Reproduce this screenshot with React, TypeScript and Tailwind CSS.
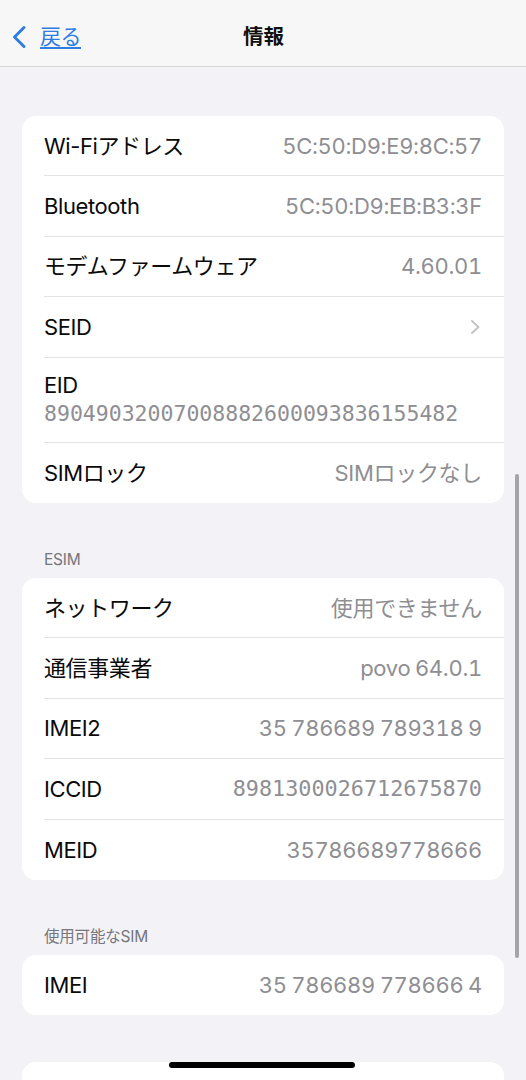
import React from "react";

type RowProps = {
  label: string;
  value?: string;
  mono?: boolean;
  chevron?: boolean;
  last?: boolean;
};

function Row({ label, value, mono, chevron, last }: RowProps) {
  return (
    <div className="pl-[22px]">
      <div
        className={
          last
            ? "h-[60.4px] flex items-center justify-between pr-[22px] pt-[1px]"
            : "h-[60.4px] flex items-center justify-between pr-[22px] pt-[1px] border-b border-[#e3e3e6]"
        }
      >
        <span className="text-[22px] tracking-[-0.4px] text-[#0a0a0a]">{label}</span>
        {chevron ? (
          <svg width="11" height="16" viewBox="0 0 11 16" className="mr-[1px]">
            <polyline
              points="2,2 8.5,8 2,14"
              fill="none"
              stroke="#c4c4c8"
              strokeWidth="2"
              strokeLinecap="round"
              strokeLinejoin="round"
            />
          </svg>
        ) : mono ? (
          <span className="font-['DejaVu_Sans_Mono',monospace] text-[21.8px] tracking-[0px] text-[#8e8e93]">
            {value}
          </span>
        ) : (
          <span className="text-[22px] tracking-[-0.3px] [word-spacing:-1px] tabular-nums text-[#8e8e93]">
            {value}
          </span>
        )}
      </div>
    </div>
  );
}

function Card({ children }: { children: React.ReactNode }) {
  return <div className="bg-white rounded-[14px] overflow-hidden">{children}</div>;
}

function Header({ text }: { text: string }) {
  return (
    <div className="mt-[47px] mb-[8px] pl-[22px] h-[20px] flex items-center text-[15.5px] text-[#76767b] tracking-[-0.2px]">
      {text}
    </div>
  );
}

export default function App() {
  return (
    <div className="relative w-[526px] h-[1080px] overflow-hidden bg-[#f2f2f7] font-['Inter','Noto_Sans_CJK_JP',sans-serif]">
      {/* Nav bar */}
      <div className="relative h-[67px] bg-[#f7f7f7] border-b border-[#d8d8db] flex items-center">
        <div className="flex items-center pl-[11px] pt-[7px]">
          <svg width="16" height="24" viewBox="0 0 16 24">
            <polyline
              points="13,2.5 3.5,12 13,21.5"
              fill="none"
              stroke="#2f7de1"
              strokeWidth="3"
              strokeLinecap="round"
              strokeLinejoin="round"
            />
          </svg>
          <span className="ml-[13px] text-[21px] text-[#2f7de1] underline underline-offset-[3px] decoration-[1.5px] tracking-[-0.5px]">
            戻る
          </span>
        </div>
        <div className="absolute left-0 right-0 top-[8px] h-[58px] flex items-center justify-center">
          <span className="text-[20.5px] font-bold text-[#111] pl-[1px]">情報</span>
        </div>
      </div>

      {/* Content */}
      <div className="px-[22px] pt-[49px]">
        <Card>
          <Row label="Wi-Fiアドレス" value="5C:50:D9:E9:8C:57" />
          <Row label="Bluetooth" value="5C:50:D9:EB:B3:3F" />
          <Row label="モデムファームウェア" value="4.60.01" />
          <Row label="SEID" chevron />
          <div className="pl-[22px]">
            <div className="h-[85px] flex flex-col justify-center pr-[22px] pt-[1px] border-b border-[#e3e3e6]">
              <span className="text-[22px] tracking-[-0.4px] text-[#0a0a0a] leading-[28px]">EID</span>
              <span className="font-['DejaVu_Sans_Mono',monospace] text-[21.5px] text-[#8e8e93] leading-[30px]">
                89049032007008882600093836155482
              </span>
            </div>
          </div>
          <Row label="SIMロック" value="SIMロックなし" last />
        </Card>

        <Header text="ESIM" />
        <Card>
          <Row label="ネットワーク" value="使用できません" />
          <Row label="通信事業者" value="povo 64.0.1" />
          <Row label="IMEI2" value="35 786689 789318 9" />
          <Row label="ICCID" value="8981300026712675870" mono />
          <Row label="MEID" value="35786689778666" last />
        </Card>

        <Header text="使用可能なSIM" />
        <Card>
          <Row label="IMEI" value="35 786689 778666 4" last />
        </Card>

        <div className="mt-[47px] bg-white rounded-[14px] h-[80px]" />
      </div>

      {/* Scroll indicator */}
      <div className="absolute left-[515px] top-[474px] w-[4px] h-[484px] rounded-full bg-[#a5a5a9]" />

      {/* Home indicator */}
      <div className="absolute left-[169px] top-[1062px] w-[186px] h-[6px] rounded-full bg-black" />
    </div>
  );
}
